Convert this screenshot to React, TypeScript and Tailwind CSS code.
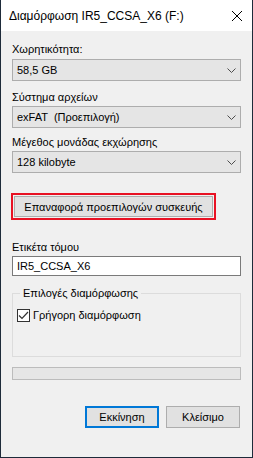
import React from "react";

function Chevron() {
  return (
    <svg width="9" height="5" viewBox="0 0 9 5" className="shrink-0">
      <path d="M0.5 0.5 L4.5 4.5 L8.5 0.5" fill="none" stroke="#4d4d4d" strokeWidth="1" />
    </svg>
  );
}

function Select({ value }: { value: string }) {
  return (
    <div className="flex h-[22px] items-center justify-between border border-[#adadad] bg-[#e5e5e5] pl-[4px] pr-[4px]">
      <span className="whitespace-pre">{value}</span>
      <Chevron />
    </div>
  );
}

function Button({ label, primary }: { label: string; primary?: boolean }) {
  return (
    <button
      className={
        primary
          ? "flex h-[22px] w-[74px] items-center justify-center border-2 border-[#0078d7] bg-[#e1e1e1]"
          : "flex h-[22px] w-[74px] items-center justify-center border border-[#adadad] bg-[#e1e1e1]"
      }
    >
      {label}
    </button>
  );
}

export default function App() {
  return (
    <div
      className="flex h-[458px] w-[253px] flex-col border-x border-b border-[#1e2b3a] text-[11px] leading-[16px] text-black"
      style={{ fontFamily: '"Liberation Sans", "DejaVu Sans", sans-serif' }}
    >
      {/* title bar */}
      <div className="flex h-[31px] shrink-0 items-center justify-between bg-white pl-[8px] pr-[10px] text-[12px]">
        <span>Διαμόρφωση IR5_CCSA_X6 (F:)</span>
        <svg width="10" height="10" viewBox="0 0 10 10">
          <path d="M0 0 L10 10 M10 0 L0 10" stroke="#000" strokeWidth="1" />
        </svg>
      </div>

      {/* body */}
      <div className="flex flex-1 flex-col bg-[#f0f0f0] px-[11px]">
        <div className="mt-[10px]">Χωρητικότητα:</div>
        <div className="mt-[2px]">
          <Select value="58,5 GB" />
        </div>

        <div className="mt-[8px]">Σύστημα αρχείων</div>
        <div className="mt-[1px]">
          <Select value="exFAT  (Προεπιλογή)" />
        </div>

        <div className="mt-[6px]">Μέγεθος μονάδας εκχώρησης</div>
        <div className="mt-[1px]">
          <Select value="128 kilobyte" />
        </div>

        <div className="ml-[-1px] mt-[20px] w-[205px] border-2 border-[#e81123] p-px">
          <button className="flex h-[21px] w-full items-center justify-center whitespace-nowrap border border-[#adadad] bg-[#e1e1e1]">
            Επαναφορά προεπιλογών συσκευής
          </button>
        </div>

        <div className="mt-[19px]">Ετικέτα τόμου</div>
        <div className="mt-[1px] flex h-[20px] items-center border border-[#7a7a7a] bg-white pl-[4px]">
          IR5_CCSA_X6
        </div>

        <fieldset className="mt-[9px] h-[72px] border border-[#dcdcdc] px-[4px] pt-0">
          <legend className="ml-[3px] px-[3px]">Επιλογές διαμόρφωσης</legend>
          <label className="mt-[6px] flex items-center gap-[3px]">
            <span className="flex h-[13px] w-[13px] items-center justify-center border border-[#333] bg-white">
              <svg width="11" height="9" viewBox="0 0 11 9">
                <path d="M1 4.5 L4 7.5 L10 1" fill="none" stroke="#333" strokeWidth="1.2" />
              </svg>
            </span>
            <span>Γρήγορη διαμόρφωση</span>
          </label>
        </fieldset>

        <div className="mt-[10px] h-[13px] border border-[#bcbcbc] bg-[#e6e6e6]" />

        <div className="mt-[26px] flex justify-end gap-[7px] pr-px">
          <Button label="Εκκίνηση" primary />
          <Button label="Κλείσιμο" />
        </div>
      </div>
    </div>
  );
}
